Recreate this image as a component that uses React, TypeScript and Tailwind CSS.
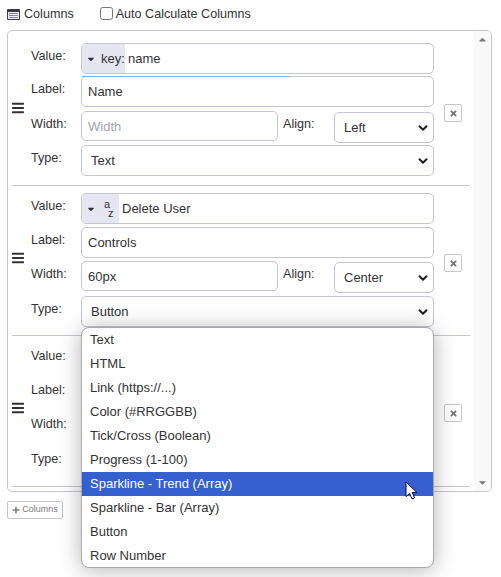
import React from 'react';
import { ChevronDown } from 'lucide-react';
import { FaBars, FaCaretDown, FaCaretUp, FaPlus, FaTimes } from 'react-icons/fa';

const fieldBorder = 'border border-[#c6c5d2] rounded-[5px] bg-white';

const typeOptions = [
    'Text',
    'HTML',
    'Link (https://...)',
    'Color (#RRGGBB)',
    'Tick/Cross (Boolean)',
    'Progress (1-100)',
    'Sparkline - Trend (Array)',
    'Sparkline - Bar (Array)',
    'Button',
    'Row Number',
];

const columns = [
    {
        id: 1,
        rowClass: 'h-[150px]',
        gridClass: 'grid-rows-[33px_35px_34px_31px]',
        addon: 'key',
        value: 'name',
        label: 'Name',
        width: '',
        placeholder: 'Width',
        align: 'Left',
        type: 'Text',
        focusing: true,
    },
    {
        id: 2,
        rowClass: 'h-[150px]',
        gridClass: 'grid-rows-[34px_34px_35px_31px]',
        addon: 'az',
        value: 'Delete User',
        label: 'Controls',
        width: '60px',
        align: 'Center',
        type: 'Button',
    },
    // Third row sits behind the open dropdown, only its labels show
    {
        id: 3,
        rowClass: 'h-[151px]',
        gridClass: 'grid-rows-[34px_34px_35px_31px]',
        addon: '',
        value: '',
        label: '',
        width: '',
        align: '',
        type: '',
    },
];

const TableIcon = () => (
    <svg className="mr-[4px] shrink-0" width="13" height="11" viewBox="0 0 13 11">
        <rect x="0" y="0" width="13" height="11" rx="1" fill="#3a3a44" />
        <rect x="1" y="3" width="11" height="7" fill="#efeff3" />
        <rect x="2" y="4" width="9" height="1" fill="#8a8a94" />
        <rect x="2" y="6" width="9" height="1" fill="#8a8a94" />
        <rect x="2" y="8" width="9" height="1" fill="#8a8a94" />
    </svg>
);

const FieldLabel: React.FC<{ text: string; className?: string }> = ({ text, className }) => (
    <span className={`block text-[12.6px] leading-[15px] mt-[6px] text-[#333] ${className ?? 'w-[50px]'}`}>{text}</span>
);

const SelectBox: React.FC<{ value: string; className: string }> = ({ value, className }) => (
    <div className={`${fieldBorder} ${className} flex items-center justify-between pl-[9px] pr-[3px] text-[#333]`}>
        <span>{value}</span>
        <ChevronDown className="w-[14px] h-[14px] text-[#222]" strokeWidth={3.5} />
    </div>
);

const ValueAddon: React.FC<{ kind: string }> = ({ kind }) => {
    if (kind === 'key') {
        return (
            <span className="w-[43px] bg-[#e6e6f2] flex items-center pl-[4px] text-[#333] shrink-0">
                <FaCaretDown className="w-[10px] h-[10px] text-[#333] mr-[5px] shrink-0" />
                key:
            </span>
        );
    }
    return (
        <span className="w-[37px] bg-[#e6e6f2] flex items-center pl-[4px] text-[#333] shrink-0">
            <FaCaretDown className="w-[10px] h-[10px] text-[#333] mr-[6px] shrink-0" />
            {kind === 'az' && (
                <span className="flex flex-col text-[11px] leading-[9px] ml-[2px]">
                    <span>a</span>
                    <span className="ml-[4px]">z</span>
                </span>
            )}
        </span>
    );
};

const ColumnRow: React.FC<{ col: (typeof columns)[number] }> = ({ col }) => (
    <div className={`${col.rowClass} mx-[4px] pt-[7px] border-b border-[#c6c5d2] flex items-start`}>
        <FaBars className="w-[12px] h-[14px] text-[#333] mt-[58px] shrink-0" />
        <div className={`ml-[7px] w-[403px] grid ${col.gridClass}`}>
            <div className="flex items-start">
                <FieldLabel text="Value:" />
                <div className={`${fieldBorder} flex flex-1 h-[31px] overflow-hidden`}>
                    <ValueAddon kind={col.addon} />
                    <input
                        readOnly
                        value={col.value}
                        className="flex-1 min-w-0 pl-[3px] outline-none text-[#333] bg-transparent"
                    />
                </div>
            </div>
            <div className="flex items-start">
                <FieldLabel text="Label:" />
                <div className="relative flex-1 min-w-0">
                    <input
                        readOnly
                        value={col.label}
                        className={`${fieldBorder} w-full h-[31px] px-[6px] outline-none text-[#333]`}
                    />
                    {/* focus ring still animating in */}
                    {col.focusing && <span className="absolute left-[1px] top-0 w-[208px] h-px bg-[#86aeef]" />}
                </div>
            </div>
            <div className="flex items-start">
                <FieldLabel text="Width:" />
                <input
                    readOnly
                    value={col.width}
                    placeholder={col.placeholder}
                    className={`${fieldBorder} w-[197px] h-[30px] px-[6px] outline-none text-[#333] placeholder:text-[#a4a4ae]`}
                />
                <FieldLabel text="Align:" className="w-[51px] ml-[5px]" />
                <SelectBox value={col.align} className="flex-1 h-[31px] mt-px" />
            </div>
            <div className="flex items-start">
                <FieldLabel text="Type:" />
                <SelectBox value={col.type} className="flex-1 h-[31px]" />
            </div>
        </div>
        <button className="ml-[10px] mt-[61px] w-[18px] h-[18px] border border-[#c6c5d2] rounded-[2px] flex items-center justify-center bg-white shrink-0">
            <FaTimes className="w-[9px] h-[9px] text-[#6f7080]" />
        </button>
    </div>
);

export default function App() {
    return (
        <div className="relative w-[501px] h-[577px] overflow-hidden bg-white text-[13px] font-['Liberation_Sans',Arial,sans-serif]">
            {/* Header */}
            <div className="flex items-center h-[30px] pl-[7px] pb-[2px] text-[12.6px] text-[#333]">
                <TableIcon />
                <span>Columns</span>
                <label className="flex items-center ml-[26px]">
                    <input type="checkbox" className="w-[13px] h-[13px] mr-[3px]" />
                    Auto Calculate Columns
                </label>
            </div>

            {/* Column list */}
            <div className="ml-[7px] w-[485px] h-[462px] border border-[#c6c5d2] rounded-[5px] flex overflow-hidden">
                <div className="flex-1 min-w-0 pt-[5px] overflow-hidden">
                    {columns.map((col) => (
                        <ColumnRow key={col.id} col={col} />
                    ))}
                </div>
                <div className="w-[17px] bg-[#f9f9fc] flex flex-col items-center justify-between py-[3px] shrink-0">
                    <FaCaretUp className="w-[11px] h-[11px] text-[#77777f]" />
                    <FaCaretDown className="w-[11px] h-[11px] text-[#77777f]" />
                </div>
            </div>

            {/* Add column */}
            <button className="ml-[7px] mt-[9px] h-[18px] w-[56px] border border-[#c6c5d2] rounded-[2px] flex items-center justify-center text-[9px] text-[#777] bg-white">
                <FaPlus className="w-[8px] h-[8px] mr-[2px]" />
                Columns
            </button>

            {/* Open Type dropdown */}
            <div className="absolute left-[81px] top-[327px] w-[353px] h-[241px] bg-white border border-[#a9a9a9] rounded-[8px] overflow-hidden shadow-[0_2px_22px_rgba(0,0,0,0.3)]">
                {typeOptions.map((opt) => (
                    <div
                        key={opt}
                        className={`h-[24px] pl-[8px] flex items-center ${
                            opt === 'Sparkline - Trend (Array)' ? 'bg-[#365fcf] text-white' : 'text-[#333]'
                        }`}
                    >
                        {opt}
                    </div>
                ))}
            </div>

            {/* Mouse pointer */}
            <svg className="absolute left-[405px] top-[481px]" width="14" height="20" viewBox="0 0 14 20">
                <path
                    d="M1 1 L1 15.5 L4.6 12.4 L7 18 L9.6 17 L7.2 11.5 L12 11.5 Z"
                    fill="#fff"
                    stroke="#0a1030"
                    strokeWidth="1"
                />
            </svg>
        </div>
    );
}
